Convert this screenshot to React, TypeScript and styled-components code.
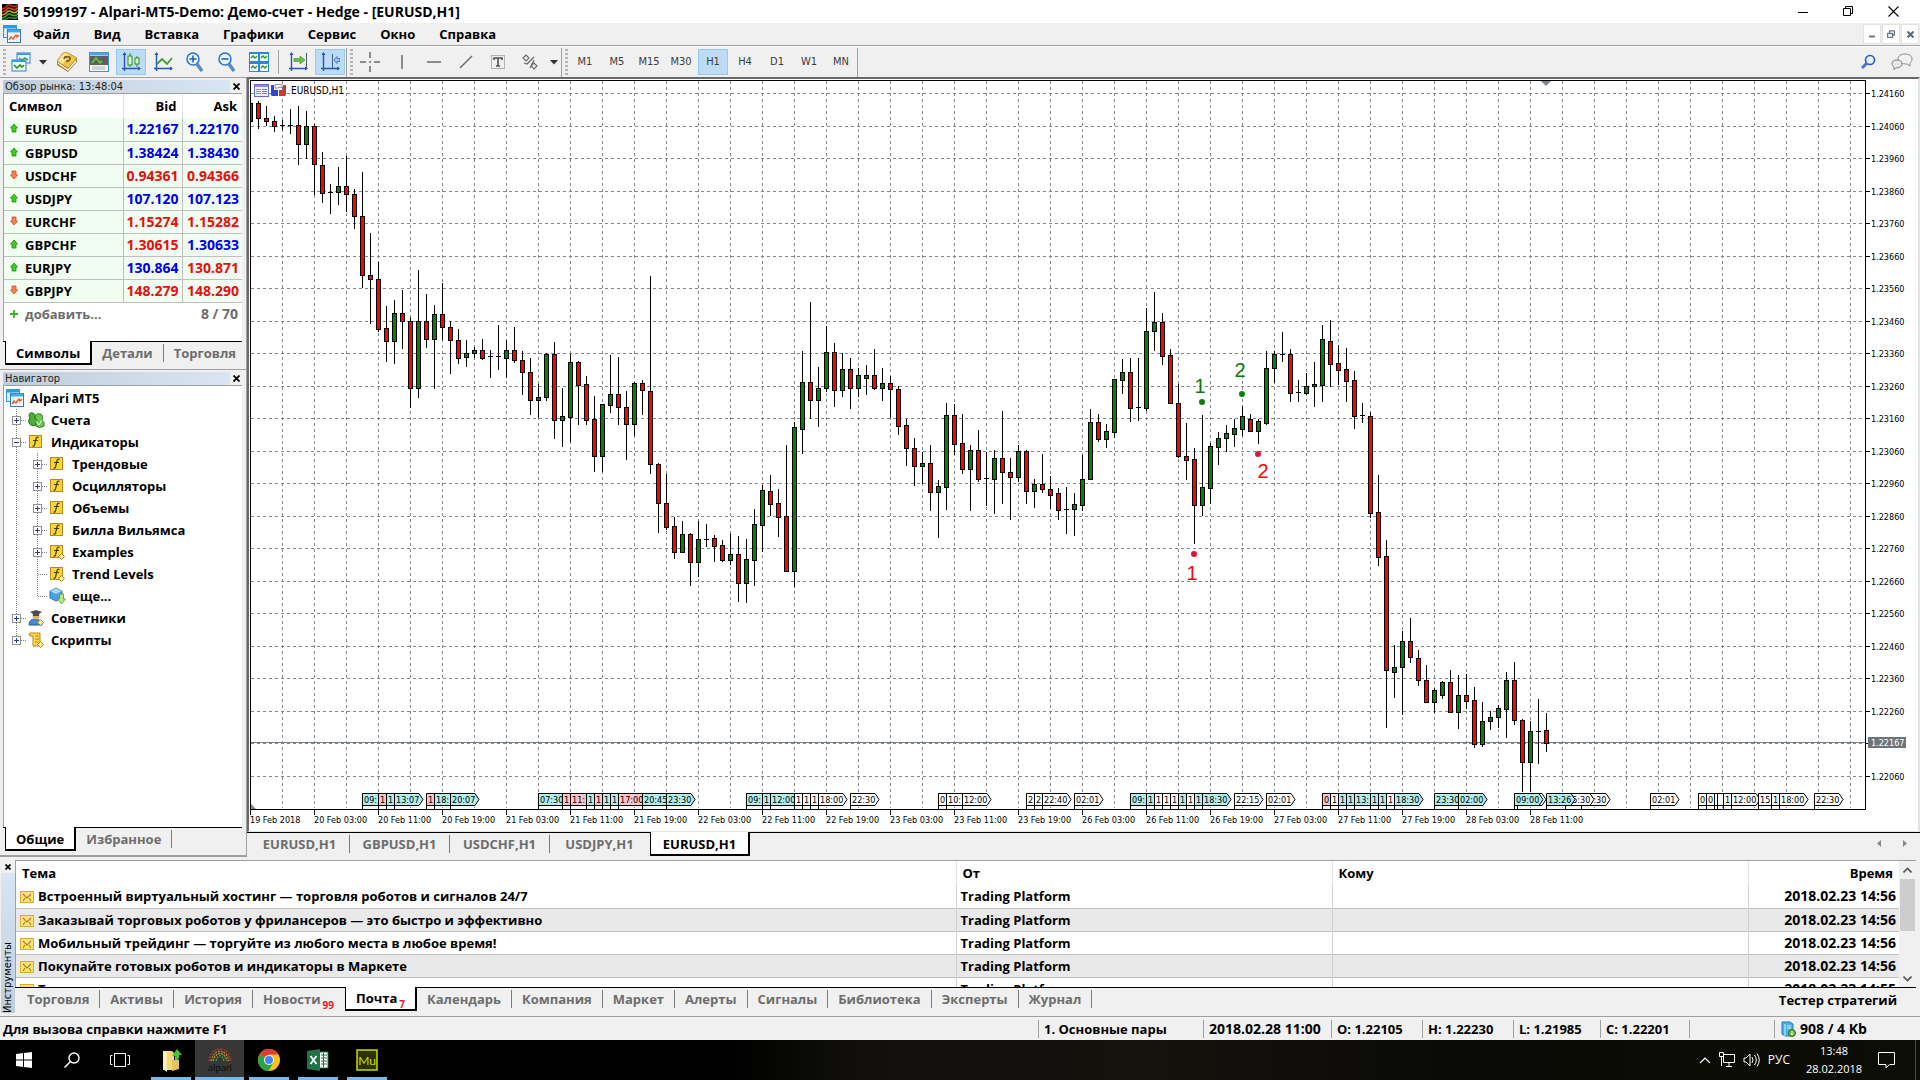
import React from "react";
import styled, { createGlobalStyle, css } from "styled-components";

const UI = `"Open Sans", "Noto Sans", sans-serif`;
const SMALL = `"DejaVu Sans Condensed", "DejaVu Sans", sans-serif`;

const GlobalStyle = createGlobalStyle`
  * { box-sizing: border-box; }
  body { margin: 0; background: #f0f0f0; color: #000; font: 700 13px/18px ${UI}; overflow: hidden; }
  button { font: inherit; color: inherit; background: none; border: 0; padding: 0; margin: 0; cursor: default; }
  svg { display: block; flex: none; }
  table { border-collapse: collapse; }
`;

/* ---------- window frame ---------- */
const Window = styled.div`
  display: flex;
  flex-direction: column;
  height: 100vh;
`;
const TitleBar = styled.header`
  display: flex;
  align-items: center;
  height: 23px;
  padding: 0 4px 0 2px;
  background: #fff;
`;
const Title = styled.h1`
  flex: 1;
  margin: 0 0 0 5px;
  font-size: 14px;
  line-height: 20px;
  font-weight: 700;
`;
const CaptionButton = styled.button`
  display: grid;
  place-items: center;
  width: 45px;
  height: 22px;
`;
const MenuBar = styled.nav`
  display: flex;
  align-items: center;
  height: 23px;
  padding-left: 3px;
  border-bottom: 1px solid #a0a0a0;
`;
const MenuItems = styled.div`
  display: flex;
  flex: 1;
`;
const MenuItem = styled.button`
  padding: 0 12px;
  line-height: 20px;
`;
const ChildButton = styled.button`
  display: grid;
  place-items: center;
  width: 18px;
  height: 20px;
  margin-right: 1px;
  background: #fff;
  border: 1px solid #e2e2e2;
`;

/* ---------- toolbar ---------- */
const Toolbar = styled.div`
  display: flex;
  align-items: center;
  height: 31px;
  border-top: 1px solid #fff;
`;
const Grip = styled.span`
  width: 3px;
  height: 26px;
  margin: 0 1px 0 3px;
  background: repeating-linear-gradient(#b4b4b4 0 2px, transparent 2px 4px);
`;
const ToolButton = styled.button<{ $on?: boolean; $wide?: boolean }>`
  display: flex;
  align-items: center;
  justify-content: center;
  gap: 8px;
  width: ${(p) => (p.$wide ? 44 : 30)}px;
  height: 26px;
  margin: 0 ${(p) => (p.$wide ? 0 : 1)}px;
  border: 1px solid ${(p) => (p.$on ? "#99c9ef" : "transparent")};
  background: ${(p) => (p.$on ? "#bddcf4" : "transparent")};
  color: #3c3c3c;
  font: 400 11px/14px ${SMALL};
`;
const ToolSeparator = styled.span<{ $gap?: number }>`
  width: 1px;
  height: ${(p) => (p.$gap ? 24 : 29)}px;
  margin: 0 ${(p) => p.$gap ?? 0}px;
  background: #a0a0a0;
`;
const Spacer = styled.span`
  flex: 1;
`;
const SideTools = styled.div`
  display: flex;
  gap: 2px;
  margin-left: auto;
  padding-right: 2px;
`;
const ArrowButton = styled.button<{ $wide?: boolean }>`
  display: grid;
  place-items: center;
  width: ${(p) => (p.$wide ? 26 : 15)}px;
  height: ${(p) => (p.$wide ? 20 : 26)}px;
`;

/* ---------- docking panels ---------- */
const Workspace = styled.main`
  display: flex;
  flex: 1;
  min-height: 0;
`;
const Dock = styled.aside`
  display: flex;
  flex-direction: column;
  width: 247px;
  border-top: 1px solid #a0a0a0;
  border-bottom: 2px solid #a0a0a0;
  border-right: 1px solid #a0a0a0;
`;
const Panel = styled.section<{ $grow?: boolean }>`
  display: flex;
  flex-direction: column;
  flex: ${(p) => (p.$grow ? "1" : "none")};
  min-height: 0;
  padding: 1px 4px 4px 3px;
  border-bottom: ${(p) => (p.$grow ? 0 : 1)}px solid #a0a0a0;
`;
const PanelHead = styled.div`
  display: flex;
  align-items: center;
  height: 14px;
`;
const PanelTitle = styled.h2`
  flex: 1;
  margin: 0;
  padding-left: 2px;
  font: 400 11px/13px ${SMALL};
  color: #1c1c1c;
  background: linear-gradient(90deg, #bfcddb, #d9e5f3);
`;
const CloseButton = styled.button`
  display: grid;
  place-items: center;
  width: 12px;
  height: 13px;
`;
const PanelBody = styled.div<{ $grow?: boolean }>`
  flex: ${(p) => (p.$grow ? "1" : "none")};
  min-height: ${(p) => (p.$grow ? 0 : 248)}px;
  background: #fff;
  border: 1px solid #a0a0a0;
  border-width: 1px 0 0 1px;
`;

const Quotes = styled.table`
  width: 100%;
  table-layout: fixed;
  font-size: 14px;
  line-height: 18px;
  th {
    height: 24px;
    padding: 0 5px 0 5px;
    text-align: right;
    font-size: 13px;
    border-right: 1px solid #e4e4e4;
  }
  th:first-child { text-align: left; }
  th:last-child { border-right: 0; }
`;
const QuoteRow = styled.tr`
  background: #f0fdf0;
  border-bottom: 1px solid #c0c0c0;
  td { height: 23px; padding: 0; border-right: 1px solid #c0c0c0; }
  td:last-child { border-right: 0; }
`;
const SymbolCell = styled.td`
  font-size: 13px;
  svg { display: inline-block; vertical-align: 1px; margin: 0 7px 0 6px; }
`;
const Quote = styled.td<{ $up: boolean }>`
  text-align: right;
  color: ${(p) => (p.$up ? "#0000e6" : "#e60f0f")};
  && { padding-right: 3px; }
`;
const AddRow = styled.tr`
  color: #6d6d6d;
  td { height: 23px; padding: 0; }
  td:last-child { text-align: right; padding-right: 4px; }
`;

const TabStrip = styled.div<{ $h?: number }>`
  display: flex;
  align-items: flex-start;
  flex: none;
  height: ${(p) => p.$h ?? 24}px;
  border-top: 1px solid #000;
`;
const Tab = styled.button<{ $on?: boolean; $last?: boolean }>`
  height: 18px;
  margin-top: 2px;
  padding: 0 10px;
  line-height: 18px;
  color: #6d6d6d;
  white-space: nowrap;
  border-right: 1px solid ${(p) => (p.$last ? "transparent" : "#7a7a7a")};
  ${(p) =>
    p.$on &&
    css`
      height: 24px;
      margin: -1px 0 0;
      padding-top: 2px;
      color: #000;
      background: #fff;
      border: solid #000;
      border-width: 0 2px 2px 1px;
    `}
`;
const LeadTabs = styled(TabStrip)`
  padding-left: 2px;
`;
const ChartTabs = styled(TabStrip)`
  padding: 0 2px 0 3px;
  ${Tab} { padding-left: 11px; padding-right: 11px; min-width: 100px; }
`;
const Badge = styled.sup`
  margin: 0 0 0 2px;
  font: 700 10px/10px ${UI};
  vertical-align: -5px;
  color: #e0202c;
`;

/* ---------- navigator ---------- */
const Tree = styled.ul`
  margin: 0;
  padding: 1px 0 0 2px;
  list-style: none;
`;
const TreeItem = styled.li`
  display: flex;
  align-items: center;
  height: 22px;
  line-height: 20px;
`;
const TreeLabel = styled.span`
  margin-left: 6px;
`;

/* ---------- chart ---------- */
const ChartPane = styled.section`
  display: flex;
  flex-direction: column;
  flex: 1;
  min-width: 0;
  background: #f0f0f0;
`;
const ChartBody = styled.div`
  display: grid;
  grid-template-columns: minmax(0, 1fr) 52px;
  grid-template-rows: minmax(0, 1fr) 21px;
  flex: 1;
  min-height: 0;
  background: #fff;
  border: 2px solid #696969;
  border-width: 2px 2px 1px 2px;
  border-color: #696969 #e3e3e3 #e3e3e3 #696969;
  padding: 1px 0 0 1px;
`;
const Plot = styled.div`
  border: 1px solid #000;
  min-height: 0;
`;
const Scaled = styled.svg`
  width: 100%;
  height: 100%;
  overflow: hidden;
`;
const AxisSvg = styled.svg<{ $span?: boolean }>`
  width: 100%;
  height: 100%;
  grid-column: ${(p) => (p.$span ? "1 / -1" : "auto")};
  overflow: visible;
`;
const Tick = styled.text<{ $light?: boolean }>`
  font: 400 9px ${SMALL};
  fill: ${(p) => (p.$light ? "#fff" : "#000")};
`;
const Legend = styled.text`
  font: 400 10px ${SMALL};
  fill: #000;
`;
const Mark = styled.text`
  font: 400 20px "Liberation Sans", Arial, sans-serif;
  text-anchor: middle;
`;

/* ---------- toolbox ---------- */
const Toolbox = styled.section`
  display: flex;
  flex: none;
  padding: 3px 4px 3px 0;
`;
const ToolboxSide = styled.div`
  display: flex;
  flex-direction: column;
  align-items: center;
  width: 15px;
`;
const SideTitle = styled.h2`
  flex: 1;
  width: 14px;
  margin: 0;
  writing-mode: vertical-rl;
  transform: rotate(180deg);
  font: 400 11px/14px ${SMALL};
  background: linear-gradient(#bfcddb, #d9e5f3);
`;
const ToolboxMain = styled.div`
  flex: 1;
  min-width: 0;
`;
const MailArea = styled.div`
  display: flex;
  height: 127px;
  background: #fff;
  border: 1px solid #a0a0a0;
  border-width: 1px 0 0 1px;
`;
const MailClip = styled.div`
  flex: 1;
  overflow: hidden;
`;
const Mail = styled.table`
  width: 100%;
  table-layout: fixed;
  th { height: 24px; padding: 0 6px; text-align: left; font-weight: 700; border-right: 1px solid #e4e4e4; }
  td { height: 23px; padding: 0 3px 0 4px; border-right: 1px solid #d0d0d0; white-space: nowrap; }
  th:last-child, td:last-child { text-align: right; border-right: 0; }
  td:last-child { font-size: 14px; }
  td:first-child svg { display: inline-block; vertical-align: -3px; margin-right: 4px; }
  tbody tr { border-bottom: 1px solid #c0c0c0; }
  tbody tr:nth-child(even) { background: #e9e9e9; }
`;
const ScrollBar = styled.div`
  display: flex;
  flex-direction: column;
  align-items: center;
  width: 17px;
  padding: 6px 0 5px;
  background: #f0f0f0;
`;
const Thumb = styled.div`
  width: 15px;
  height: 52px;
  margin: 6px 0 auto;
  background: #cdcdcd;
`;
const Tester = styled.button`
  margin: 2px 19px 0 auto;
  line-height: 20px;
`;

const StatusBar = styled.footer`
  display: flex;
  align-items: center;
  height: 24px;
  border-top: 1px solid #a0a0a0;
`;
const Hint = styled.span`
  flex: 1;
  padding-left: 3px;
`;
const Cell = styled.span<{ $w: number; $large?: boolean }>`
  display: flex;
  align-items: center;
  gap: 4px;
  width: ${(p) => p.$w}px;
  height: 18px;
  padding-left: 5px;
  border-left: 1px solid #a0a0a0;
  font-size: ${(p) => (p.$large ? 14 : 13)}px;
  white-space: nowrap;
`;

/* ---------- taskbar ---------- */
const Taskbar = styled.footer`
  display: flex;
  height: 40px;
  background: linear-gradient(90deg, #000 0 38%, #11100c 45%, #15120e 60%, #0a0a06 75%, #0c0d06);
  color: #fff;
  font-weight: 400;
  font-size: 12px;
  line-height: 18px;
`;
const TaskButton = styled.button<{ $open?: boolean; $on?: boolean }>`
  display: grid;
  place-items: center;
  width: ${(p) => (p.$open ? (p.$on ? 49 : 40) : 48)}px;
  margin: 0 ${(p) => (p.$open && !p.$on ? 4 : 0)}px 0 ${(p) => (p.$open && !p.$on ? 5 : 0)}px;
  background: ${(p) => (p.$on ? "#373737" : "transparent")};
  border-bottom: 3px solid ${(p) => (p.$open ? "#76b9ed" : "transparent")};
  border-top: 3px solid transparent;
`;
const OpenApps = styled.div`
  display: flex;
  margin-left: 2px;
`;
const Tray = styled.div`
  display: flex;
  align-items: center;
  margin-left: auto;
  gap: 8px;
`;
const Clock = styled.time`
  width: 72px;
  font-size: 11px;
  text-align: center;
  white-space: pre-line;
`;
const DesktopEdge = styled.span`
  width: 5px;
  height: 40px;
  margin-left: 12px;
  border-left: 1px solid #4a4a4a;
`;

/* ---------- data ---------- */
// Price scale of the plot: pixels per stored unit, counted down from its top edge.
const UNIT = 530 / 1568;
const STEP = 8;

type Kind = "g" | "r" | "d";
// high, body top, body bottom, low, kind (g rising, r falling, d doji)
const CANDLES: [number, number, number, number, Kind][] = [
  [68,68,120,120,"g"],[62,69,113,144,"r"],[77,113,122,136,"r"],[107,122,137,153,"r"],[118,133,134,148,"d"],
  [86,134,136,159,"d"],[77,134,190,250,"r"],[92,136,190,234,"g"],[130,137,249,340,"r"],[212,250,335,363,"r"],
  [307,332,334,396,"d"],[257,315,332,370,"g"],[225,315,338,391,"r"],[322,338,403,440,"r"],[272,403,578,614,"r"],
  [453,578,590,721,"r"],[538,590,736,745,"r"],[669,735,773,833,"r"],[651,690,773,839,"g"],[621,690,714,796,"r"],
  [704,714,912,969,"r"],[562,714,912,940,"g"],[633,714,765,793,"r"],[666,693,765,913,"g"],[601,693,732,769,"r"],
  [713,732,770,869,"r"],[737,770,821,839,"r"],[769,809,819,849,"g"],[790,800,809,822,"g"],[766,800,823,827,"r"],
  [799,818,820,881,"d"],[725,818,818,857,"d"],[769,800,821,881,"g"],[731,800,829,836,"r"],[802,829,865,932,"r"],
  [822,865,948,991,"r"],[899,938,948,1000,"g"],[808,812,939,949,"g"],[775,812,1007,1061,"r"],[911,995,1007,1085,"g"],
  [811,835,996,1071,"g"],[831,835,901,1020,"r"],[876,900,1005,1021,"r"],[935,1004,1113,1160,"r"],[959,960,1113,1160,"g"],
  [814,930,961,984,"g"],[820,930,968,1020,"r"],[920,968,1017,1123,"r"],[894,897,1017,1052,"g"],[888,897,918,990,"r"],
  [580,921,1135,1165,"r"],[1133,1137,1252,1340,"r"],[1166,1252,1321,1330,"r"],[1293,1320,1395,1417,"r"],[1305,1344,1395,1398,"g"],
  [1341,1344,1425,1496,"r"],[1305,1359,1425,1470,"g"],[1314,1357,1359,1381,"d"],[1346,1356,1378,1425,"r"],[1361,1377,1419,1425,"r"],
  [1343,1403,1419,1434,"g"],[1349,1403,1487,1543,"r"],[1358,1417,1487,1546,"g"],[1269,1315,1419,1496,"g"],[1198,1214,1316,1395,"g"],
  [1169,1217,1253,1290,"r"],[1210,1252,1292,1352,"r"],[1080,1291,1452,1455,"r"],[1012,1028,1452,1499,"g"],[802,892,1032,1105,"g"],
  [657,892,948,1002,"r"],[849,912,948,1026,"g"],[728,806,912,922,"g"],[778,806,918,966,"r"],[808,856,918,937,"g"],
  [822,856,912,972,"r"],[852,874,912,937,"g"],[843,874,881,932,"g"],[796,874,912,916,"r"],[852,897,912,949,"g"],
  [876,897,915,1000,"r"],[906,915,1023,1049,"r"],[1003,1022,1090,1141,"r"],[1059,1090,1143,1200,"r"],[1101,1134,1143,1195,"g"],
  [1080,1134,1218,1275,"r"],[1183,1202,1218,1355,"g"],[956,990,1203,1271,"g"],[959,990,1076,1108,"r"],[988,1075,1150,1165,"r"],
  [1080,1096,1150,1275,"g"],[1035,1096,1179,1188,"r"],[1101,1177,1178,1260,"d"],[1095,1119,1179,1284,"g"],[979,1119,1161,1254,"r"],
  [1118,1161,1174,1301,"r"],[1080,1099,1174,1188,"g"],[1095,1099,1215,1254,"r"],[1180,1196,1215,1266,"g"],[1106,1196,1209,1221,"r"],
  [1172,1211,1227,1269,"r"],[1206,1223,1271,1301,"r"],[1203,1268,1270,1343,"d"],[1221,1255,1268,1349,"g"],[1108,1181,1256,1274,"g"],
  [973,1013,1181,1183,"g"],[988,1013,1061,1071,"r"],[1018,1039,1061,1088,"g"],[886,886,1040,1060,"g"],[825,865,887,928,"g"],
  [822,865,969,1011,"r"],[822,968,970,1008,"d"],[676,744,971,978,"g"],[627,717,744,802,"g"],[689,717,816,842,"r"],
  [796,815,957,959,"r"],[899,957,1113,1117,"r"],[1015,1113,1123,1183,"r"],[1089,1122,1256,1372,"r"],[991,1205,1256,1290,"g"],
  [1074,1084,1206,1254,"g"],[1041,1060,1085,1138,"g"],[1021,1045,1060,1101,"g"],[1003,1031,1046,1085,"g"],[964,995,1032,1053,"g"],
  [988,1004,1037,1041,"r"],[1003,1010,1037,1076,"g"],[802,853,1014,1020,"g"],[802,812,853,895,"g"],[746,812,813,833,"d"],
  [796,812,925,952,"r"],[888,923,924,952,"d"],[867,906,925,932,"g"],[834,900,906,966,"g"],[725,767,901,952,"g"],
  [710,773,841,907,"r"],[784,838,857,901,"r"],[793,856,890,952,"r"],[861,889,993,1032,"r"],[956,992,994,1014,"d"],
  [982,995,1280,1295,"r"],[1169,1279,1410,1438,"r"],[1361,1409,1745,1917,"r"],[1672,1738,1751,1828,"g"],[1630,1661,1738,1879,"g"],
  [1592,1661,1708,1725,"r"],[1686,1711,1776,1792,"r"],[1731,1776,1839,1842,"r"],[1799,1806,1839,1872,"g"],[1778,1782,1819,1830,"g"],
  [1746,1782,1871,1873,"r"],[1760,1818,1871,1920,"g"],[1757,1818,1836,1860,"r"],[1796,1835,1964,1976,"r"],[1841,1895,1964,1972,"g"],
  [1867,1886,1896,1922,"g"],[1849,1859,1886,1917,"g"],[1750,1776,1860,1946,"g"],[1723,1776,1893,1907,"r"],[1889,1892,2019,2106,"r"],
  [1897,1927,2019,2106,"g"],[1831,1925,1927,2023,"d"],[1873,1924,1961,1987,"r"],
];

type Tone = "c" | "p" | "w";
const TONES: Record<Tone, string> = { c: "#b4ecea", p: "#fbc3cb", w: "#fff" };
// offset from the left edge of the plot, caption, tone; later flags cover earlier ones
const FLAGS: [number, string, Tone][] = [
  [112,"09:","c"],[128,"1","p"],[136,"1","c"],[144,"13:07","c"],[176,"1","p"],[184,"18:","c"],[200,"20:07","c"],
  [288,"07:30","c"],[312,"1","p"],[320,"11:","p"],[336,"1","c"],[344,"1","p"],[352,"1","c"],[360,"1","c"],
  [368,"17:00","p"],[392,"20:45","c"],[416,"23:30","c"],
  [496,"09:","c"],[512,"1","c"],[520,"12:00","c"],[544,"1","w"],[552,"1","w"],[560,"1","w"],[568,"18:00","w"],
  [600,"22:30","w"],[688,"0","w"],[696,"10:","w"],[712,"12:00","w"],[776,"2","w"],[784,"2","w"],[792,"22:40","w"],
  [824,"02:01","w"],[880,"09:","c"],[896,"1","c"],[904,"1","w"],[912,"1","w"],[920,"1","w"],[928,"1","c"],
  [936,"1","w"],[944,"1","c"],[952,"18:30","c"],[984,"22:15","w"],[1016,"02:01","w"],
  [1072,"0","p"],[1080,"1","w"],[1088,"1","c"],[1096,"1","c"],[1104,"13:","c"],[1120,"1","c"],[1128,"1","c"],
  [1136,"1","w"],[1144,"18:30","c"],[1184,"23:30","c"],[1208,"02:00","c"],
  [1331,"16:30","w"],[1315,"15:30","w"],[1267,"","w"],[1264,"09:00","c"],[1296,"13:26","c"],
  [1400,"02:01","w"],[1448,"0","w"],[1456,"0","w"],[1464,"","w"],[1467,"","w"],[1473,"1","w"],[1481,"12:00","w"],
  [1508,"15","w"],[1521,"1","w"],[1529,"18:00","w"],[1564,"22:30","w"],
];

const DAYS = ["20", "21", "22", "23", "26", "27"];
const TIMES = [
  "19 Feb 2018",
  ...DAYS.flatMap((d) => ["03:00", "11:00", "19:00"].map((t) => `${d} Feb ${t}`)),
  "28 Feb 03:00",
  "28 Feb 11:00",
];
const range = (n: number) => Array.from({ length: n }, (_, i) => i);
const levelY = (i: number) => Math.round(13 + 32.5 * i);
const PRICE_Y = 662;

const QUOTES: [string, boolean, string, boolean, string, boolean][] = [
  ["EURUSD", true, "1.22167", true, "1.22170", true],
  ["GBPUSD", true, "1.38424", true, "1.38430", true],
  ["USDCHF", false, "0.94361", false, "0.94366", false],
  ["USDJPY", true, "107.120", true, "107.123", true],
  ["EURCHF", false, "1.15274", false, "1.15282", false],
  ["GBPCHF", true, "1.30615", false, "1.30633", true],
  ["EURJPY", true, "130.864", true, "130.871", false],
  ["GBPJPY", false, "148.279", false, "148.290", false],
];

const MAILS = [
  ["Встроенный виртуальный хостинг — торговля роботов и сигналов 24/7", "2018.02.23 14:56"],
  ["Заказывай торговых роботов у фрилансеров — это быстро и эффективно", "2018.02.23 14:56"],
  ["Мобильный трейдинг — торгуйте из любого места в любое время!", "2018.02.23 14:56"],
  ["Покупайте готовых роботов и индикаторы в Маркете", "2018.02.23 14:56"],
  ["Т", "2018.02.23 14:55"],
];

/* ---------- icons ---------- */
const Icon = ({ w = 20, h = w, children }: { w?: number; h?: number; children: React.ReactNode }) => (
  <svg width={w} height={h} viewBox={`0 0 ${w} ${h}`} fill="none" aria-hidden="true">
    {children}
  </svg>
);

const AppIcon = () => (
  <Icon w={16}>
    <rect width="16" height="16" fill="#0c0a05" />
    <path d="M0 5q4-1 5-3t5 0 6-2" stroke="#d0281c" strokeWidth="1.6" />
    <path d="M0 8q4-1 5-3t5 0 6-2" stroke="#e0491c" strokeWidth="1.6" />
    <path d="M0 11q4-1 5-3t5 0 6-2" stroke="#b8b020" strokeWidth="1.6" />
    <path d="M0 14q4-1 5-3t5 0 6-2" stroke="#4fae2a" strokeWidth="1.6" />
    <path d="M1 16q4-1 5-2t5 0 5-2" stroke="#2f8f2a" strokeWidth="1.4" />
  </Icon>
);
const WindowsIcon = () => (
  <Icon w={18}>
    <rect x=".5" y=".5" width="13" height="12" fill="#d9edfb" stroke="#2f9bdc" />
    <path d="M1 2h12" stroke="#2f9bdc" strokeWidth="3" />
    <rect x="4.500" y="4.500" width="13" height="13" fill="#fff" stroke="#2b7fc4" />
    <path d="M5 6h12" stroke="#44a9e6" strokeWidth="3" />
    <path d="M8 8v9M11 8v9M14 8v9M5 11h12M5 14h12" stroke="#d5e3ee" />
    <path d="m6 15 2-3 2 2 3-4 1 2 2-2" stroke="#ea5a2c" strokeWidth="1.4" />
  </Icon>
);
const DropIcon = () => (
  <Icon w={8} h={5}><path d="M0 0h8L4 4.500z" fill="#303030" /></Icon>
);
const ChartsIcon = () => (
  <Icon>
    <rect x="6" y="1" width="13" height="10" fill="#eef7fd" stroke="#2f7fd0" />
    <path d="M6 2h13" stroke="#3b9be6" strokeWidth="2" />
    <path d="m8 6 3 2 3-2 3 2" stroke="#3f9f2c" strokeWidth="1.5" />
    <rect x="1" y="8" width="14" height="11" fill="#f3fafe" stroke="#2f7fd0" />
    <path d="M1 9h14" stroke="#3b9be6" strokeWidth="2" />
    <path d="m3 13 3 3 3-3 2 2 2-2" stroke="#2d9a24" strokeWidth="1.700" />
  </Icon>
);
const BookIcon = () => (
  <Icon>
    <path d="M0 9v4l11 7 9-10V6L11 16z" fill="#a9832a" />
    <path d="m0 9 5-7q2-2 4-2l11 6-9 10z" fill="#ecc650" stroke="#b38b24" strokeWidth=".8" />
    <path d="m1 9 4-6q2-2 4-2l3 2-6 9z" fill="#f9e798" />
    <path d="m7 7 1-2q6-1 5 2-1 3-4 2" stroke="#82611a" strokeWidth="1.800" />
    <path d="m1 11 10 7 8-9" stroke="#fffbe8" strokeWidth="1.200" />
  </Icon>
);
const TerminalIcon = () => (
  <Icon>
    <rect x=".5" y=".5" width="19" height="19" fill="#f4f4f4" stroke="#4791d2" />
    <path d="M1 2h18" stroke="#4ca5e8" strokeWidth="3" />
    <path d="M1 4h18v9H1z" fill="#5b6062" />
    <path d="m3 11 4-5 4 5 2-2" stroke="#66c332" strokeWidth="1.800" />
    <path d="M3 15h13M3 17h13" stroke="#b4b4b4" />
  </Icon>
);
const Axes = () => (
  <>
    <path d="M3.500 1v18M1 16.500h18" stroke="#2455b4" strokeWidth="1.400" />
    <path d="m3.500 0 2 3h-4zM20 16.500l-3 2v-4z" fill="#2455b4" />
  </>
);
const CandlesIcon = () => (
  <Icon>
    <Axes />
    <path d="M9 1v14M16 4v11" stroke="#2e8f20" />
    <rect x="7" y="4" width="4" height="9" fill="#d9f4cf" stroke="#2e8f20" />
    <rect x="14" y="6" width="4" height="6" fill="#d9f4cf" stroke="#2e8f20" />
  </Icon>
);
const LineIcon = () => (
  <Icon><Axes /><path d="m4 12 5-5 5 5 5-6" stroke="#3f9f2c" strokeWidth="1.800" /></Icon>
);
const ZoomIcon = ({ plus }: { plus?: boolean }) => (
  <Icon w={18} h={20}>
    <circle cx="7" cy="7" r="6" fill="#e6f4ff" stroke="#2f73c8" strokeWidth="1.500" />
    <path d="m11 12 5 7" stroke="#5a8bbd" strokeWidth="3.500" />
    <path d={plus ? "M3.500 7h7M7 3.500v7" : "M3.500 7h7"} stroke="#2560b4" strokeWidth="1.600" />
  </Icon>
);
const TileIcon = () => (
  <Icon>
    <rect width="20" height="20" fill="#2f86d6" />
    {[[1, 2], [11, 2], [1, 12], [11, 12]].map(([x, y]) => (
      <g key={`${x}${y}`}>
        <rect x={x} y={y} width="8" height="7" fill="#eef7fd" />
        <path d={`m${x + 1} ${y + 4} 2-2 2 2 2-2`} stroke="#2d9a24" strokeWidth="1.300" />
      </g>
    ))}
  </Icon>
);
const AutoScrollIcon = () => (
  <Icon><Axes /><path d="M18.500 1v15" stroke="#4d5a66" /><path d="M6 6.500h6V4l5 4-5 4V9.500H6z" fill="#6ec04a" stroke="#3f9530" strokeWidth=".7" /></Icon>
);
const ShiftIcon = () => (
  <Icon><Axes /><path d="M12.500 2v14" stroke="#3a5f92" /><path d="M20 6.500h-3V4.500l-3 3.500 3 3.500V9.500h3z" fill="#9ec3f0" stroke="#2f6cc0" strokeWidth=".8" /></Icon>
);
const g = "#6a6a6a";
const CrossIcon = () => <Icon><path d="M0 10h6M14 10h6M10 0v6M10 14v6M9 10h2" stroke={g} strokeWidth="1.500" /></Icon>;
const VLineIcon = () => <Icon><path d="M10 3v14" stroke={g} strokeWidth="1.500" /></Icon>;
const HLineIcon = () => <Icon><path d="M3 10h14" stroke={g} strokeWidth="1.500" /></Icon>;
const TrendIcon = () => <Icon><path d="M4 16 16 4" stroke={g} strokeWidth="1.500" /></Icon>;
const TextIcon = () => (
  <Icon>
    <rect x="3.500" y="3.500" width="13" height="13" stroke="#777" strokeDasharray="1 1" />
    <path d="M6 8V6h8v2M10 6v8M8 14h4" stroke="#505050" strokeWidth="1.600" />
  </Icon>
);
const ShapesIcon = () => (
  <Icon w={16}>
    <path d="m4 1 3 3-3 3-3-3zM2 9l3 1 7-7M8 14l4-8M12 9l3 3-3 3-3-3z" stroke={g} strokeWidth="1.200" />
  </Icon>
);
const SearchIcon = () => (
  <Icon w={16}><circle cx="10" cy="6" r="4.500" fill="#e8f2ff" stroke="#2d55c8" strokeWidth="1.600" /><path d="m7 9-5 5" stroke="#4a74dc" strokeWidth="3" /></Icon>
);
const ChatIcon = () => (
  <Icon w={22} h={18}>
    <path d="M14 1c4 0 7 2 7 5 0 2-1 3-2 4v3l-3-2c-5 0-9-2-9-5s3-5 7-5z" fill="#f2f2f2" stroke="#8d8d8d" />
    <path d="M6 7c3 0 5 1 5 4s-3 4-6 4l-2 2v-3c-1-1-2-2-2-3 0-3 2-4 5-4z" fill="#e6e6e6" stroke="#858585" />
  </Icon>
);
const TrendArrow = ({ up }: { up: boolean }) => (
  <svg width="8" height="10" viewBox="0 0 8 10" aria-hidden="true">
    <path d={up ? "M4 1 7.500 5H6v4H2V5H.5z" : "M4 9 7.500 5H6V1H2v4H.5z"} fill={up ? "#45c928" : "#f4805a"} stroke={up ? "#1f9010" : "#d0492a"} strokeWidth=".8" />
  </svg>
);
const Close = ({ s = 7, c = "#000", w = 1.8 }: { s?: number; c?: string; w?: number }) => (
  <Icon w={s}><path d={`M.5.5l${s - 1} ${s - 1}M${s - 0.5}.5l-${s - 1} ${s - 1}`} stroke={c} strokeWidth={w} /></Icon>
);
const FIcon = ({ own }: { own?: boolean }) => (
  <Icon w={18}>
    <rect x="2.500" y="2.500" width="12" height="12" fill="#fbd53a" stroke="#b48a1c" />
    <path d="M11.500 4.500q-2-1-2.500 1.500l-1.500 6q-.5 1.500-2 1M6 7.500h5" stroke="#4a3a08" strokeWidth="1.200" />
    {own && <path d="m13.500 10.500 3 3-3 3-3-3z" fill="#fdeea0" stroke="#a8861e" />}
  </Icon>
);
const UsersIcon = () => (
  <Icon w={18}>
    <path d="M2 5q0-4 4-3 3 1 2 5 3 2 2 7-6 2-8-2-1-4 1-5z" fill="#4cae35" stroke="#24741a" />
    <path d="M8 6q1-4 5-3 4 1 2 6 3 2 2 6-5 3-8 0-1-3 1-5z" fill="#6fc84c" stroke="#2b7d1e" />
    <path d="m9 10 3 4 3-5" stroke="#e8fadf" />
  </Icon>
);
const MarketIcon = () => (
  <Icon w={18}>
    <path d="m8 1 6 3v7l-6 3-6-3V4z" fill="#4aa3dc" stroke="#2a76b0" />
    <path d="m2 4 6 3 6-3-6-3z" fill="#a4dbf8" />
    <path d="M11.500 7h4v5h2l-4 5-4-5h2z" fill="#b6e87a" stroke="#5a9a2c" strokeWidth=".8" />
  </Icon>
);
const ExpertIcon = () => (
  <Icon w={18}>
    <path d="M2 16q0-6 6-6t7 6z" fill="#3f8ed4" stroke="#245f9c" />
    <circle cx="9" cy="7" r="3.500" fill="#d8b26a" />
    <path d="m3 3 6-2 6 2-3 2v2H6V5z" fill="#4c4c4c" />
    <path d="m13.500 10.500 3 3-3 3-3-3z" fill="#fdeea0" stroke="#a8861e" />
  </Icon>
);
const ScriptIcon = () => (
  <Icon w={18}>
    <path d="M3 2h10v13H6V5H3q-2-1 0-3z" fill="#fbd84c" stroke="#b48a1c" />
    <path d="M8 5h4M8 8h4M8 11h3" stroke="#b48a1c" />
    <path d="m13.500 10.500 3 3-3 3-3-3z" fill="#fdeea0" stroke="#a8861e" />
  </Icon>
);
const MailIcon = () => (
  <Icon w={14}>
    <rect x=".5" y="1.500" width="13" height="11" fill="#fde37a" stroke="#dba92c" />
    <path d="m3 4 4 4 4-4M3 11l2-3M11 11 9 8" stroke="#b07c10" strokeWidth="1.100" />
  </Icon>
);

// Dotted guide of the tree: a vertical line, a stub to the right and an optional box.
const Guide = ({ down = true, stub = true, box }: { down?: boolean; stub?: boolean; box?: "+" | "-" }) => (
  <svg width="21" height="22" viewBox="0 0 21 22" fill="none" shapeRendering="crispEdges" aria-hidden="true">
    <path d={`M10.500 0v${down ? 22 : 11}`} stroke="#808080" strokeDasharray="1 1" />
    {stub && <path d="M11 11.500h10" stroke="#808080" strokeDasharray="1 1" />}
    {box && (
      <>
        <rect x="6.500" y="7.500" width="8" height="8" fill="#fff" stroke="#919191" />
        <path d={box === "+" ? "M8 11.500h5M10.500 9v5" : "M8 11.500h5"} stroke="#2b3f8c" />
      </>
    )}
  </svg>
);

/* ---------- parts ---------- */
const Candle = ({ i }: { i: number }) => {
  const [h, t, b, l, kind] = CANDLES[i];
  const x = i * STEP + 0.5;
  const y = (v: number) => Math.round(v * UNIT);
  const top = y(t);
  const height = Math.max(y(b) - top, 1);
  return (
    <g stroke="#000">
      <path d={`M${x} ${y(h)}V${y(l)}`} />
      {kind === "d" ? (
        <path d={`M${x - 2.5} ${top + 0.5}h5`} />
      ) : (
        <rect x={x - 2} y={top + 0.5} width="4" height={height} fill={kind === "g" ? "#0f7a0f" : "#f00808"} />
      )}
    </g>
  );
};

const Flag = ({ x, text, tone }: { x: number; text: string; tone: Tone }) => (
  <g>
    <path d={`M${x + 0.5} 729V713.500H${x + 25}l4 6-4 6H${x + 0.5}`} fill={TONES[tone]} stroke="#000" />
    <Tick x={x + 2} y="723">{text}</Tick>
  </g>
);

const Chart = () => (
  <ChartBody>
    <Plot>
      <Scaled role="img" aria-label="EURUSD,H1" fill="none">
        <g transform="translate(-1 -1)">
          <g stroke="#7d8790" strokeDasharray="3 3" shapeRendering="crispEdges">
            {range(60).map((i) => <line key={i} x1={32.5 + 32 * i} x2={32.5 + 32 * i} y1="1" y2="100%" />)}
            {range(22).map((i) => <line key={i} x1="1" x2="100%" y1={levelY(i) + 0.5} y2={levelY(i) + 0.5} />)}
          </g>
          <line x1="0" x2="101%" y1={PRICE_Y + 0.5} y2={PRICE_Y + 0.5} stroke="#787c80" />
          <g shapeRendering="crispEdges">
            {CANDLES.map((_, i) => <Candle key={i} i={i} />)}
          </g>
          {FLAGS.map(([x, text, tone], i) => <Flag key={i} x={x} text={text} tone={tone} />)}
          <path d="M1291 1h10l-5 5z" fill="#7d8790" />
          <path d="M1 724v5h5z" fill="#7d8790" />
          <g fill="#0f7a0f">
            <circle cx="952" cy="322" r="3" />
            <circle cx="992" cy="314" r="3" />
            <Mark x="950" y="313">1</Mark>
            <Mark x="990" y="297">2</Mark>
          </g>
          <g fill="#dc143c">
            <circle cx="1008" cy="374" r="3" />
            <circle cx="944" cy="474" r="3" />
          </g>
          <g fill="#f00808">
            <Mark x="1013" y="398">2</Mark>
            <Mark x="942" y="500">1</Mark>
          </g>
          <rect x="4.500" y="4.500" width="14" height="12" fill="#f2f2ff" stroke="#6a6ac8" />
          <path d="M5 6h13" stroke="#8c8ce0" strokeWidth="2" />
          <path d="M6 9.500h5M6 11.500h5M6 13.500h5" stroke="#e0705a" />
          <path d="M12 9.500h5M12 11.500h5M12 13.500h5" stroke="#6a7ae0" />
          <path d="M21 5h3v5h4v6h-6l-1-1z" fill="#3046d8" />
          <path d="M36 5h-3v5h-4v6h6l1-1z" fill="#c83a34" />
          <path d="M25 4.500h7v3h-4l-2 2v-2h-1z" fill="#f4f4f4" stroke="#777" strokeWidth=".7" />
          <Legend x="41" y="14">EURUSD,H1</Legend>
        </g>
      </Scaled>
    </Plot>
    <AxisSvg fill="none">
      {range(22).map((i) => (
        <g key={i}>
          <path d={`M0 ${levelY(i) + 0.5}h4`} stroke="#000" />
          <Tick x="5" y={levelY(i) + 4}>{(1.2416 - i * 0.001).toFixed(5)}</Tick>
        </g>
      ))}
      <rect x="2" y={PRICE_Y - 5} width="38" height="11" fill="#6c747c" />
      <Tick $light x="5" y={PRICE_Y + 4}>1.22167</Tick>
    </AxisSvg>
    <AxisSvg $span fill="none">
      {TIMES.map((t, i) => (
        <g key={t}>
          <path d={`M${64 * i + 0.5} 0v5`} stroke="#000" />
          <Tick x={64 * i} y="13">{t}</Tick>
        </g>
      ))}
    </AxisSvg>
  </ChartBody>
);

const MarketWatch = () => (
  <Panel>
    <PanelHead>
      <PanelTitle>Обзор рынка: 13:48:04</PanelTitle>
      <CloseButton aria-label="Закрыть"><Close /></CloseButton>
    </PanelHead>
    <PanelBody>
      <Quotes>
        <colgroup><col /><col width="59" /><col width="60" /></colgroup>
        <thead><tr><th>Символ</th><th>Bid</th><th>Ask</th></tr></thead>
        <tbody>
          {QUOTES.map(([name, up, bid, bidUp, ask, askUp]) => (
            <QuoteRow key={name}>
              <SymbolCell><TrendArrow up={up} />{name}</SymbolCell>
              <Quote $up={bidUp}>{bid}</Quote>
              <Quote $up={askUp}>{ask}</Quote>
            </QuoteRow>
          ))}
          <AddRow>
            <SymbolCell>
              <svg width="8" height="8" viewBox="0 0 8 8" aria-hidden="true"><path d="M4 0v8M0 4h8" stroke="#3fae28" strokeWidth="1.800" /></svg>
              добавить...
            </SymbolCell>
            <td colSpan={2}>8 / 70</td>
          </AddRow>
        </tbody>
      </Quotes>
    </PanelBody>
    <LeadTabs>
      <Tab $on>Символы</Tab><Tab>Детали</Tab><Tab $last>Торговля</Tab>
    </LeadTabs>
  </Panel>
);

const BRANCH: [string, React.ReactNode, boolean][] = [
  ["Трендовые", <FIcon />, true],
  ["Осцилляторы", <FIcon />, true],
  ["Объемы", <FIcon />, true],
  ["Билла Вильямса", <FIcon />, true],
  ["Examples", <FIcon own />, true],
  ["Trend Levels", <FIcon own />, false],
  ["еще...", <MarketIcon />, false],
];

const Navigator = () => (
  <Panel $grow>
    <PanelHead>
      <PanelTitle>Навигатор</PanelTitle>
      <CloseButton aria-label="Закрыть"><Close /></CloseButton>
    </PanelHead>
    <PanelBody $grow>
      <Tree>
        <TreeItem><WindowsIcon /><TreeLabel>Alpari MT5</TreeLabel></TreeItem>
        <TreeItem><Guide box="+" /><UsersIcon /><TreeLabel>Счета</TreeLabel></TreeItem>
        <TreeItem><Guide box="-" /><FIcon /><TreeLabel>Индикаторы</TreeLabel></TreeItem>
        {BRANCH.map(([name, icon, box], i) => (
          <TreeItem key={name}>
            <Guide stub={false} />
            <Guide box={box ? "+" : undefined} down={i < BRANCH.length - 1} />
            {icon}
            <TreeLabel>{name}</TreeLabel>
          </TreeItem>
        ))}
        <TreeItem><Guide box="+" /><ExpertIcon /><TreeLabel>Советники</TreeLabel></TreeItem>
        <TreeItem><Guide box="+" down={false} /><ScriptIcon /><TreeLabel>Скрипты</TreeLabel></TreeItem>
      </Tree>
    </PanelBody>
    <LeadTabs><Tab $on>Общие</Tab><Tab>Избранное</Tab></LeadTabs>
  </Panel>
);

const TOOL_TABS = ["Торговля", "Активы", "История", "Новости", "Почта", "Календарь", "Компания", "Маркет", "Алерты", "Сигналы", "Библиотека", "Эксперты", "Журнал"];
const BADGES: Record<string, string> = { Новости: "99", Почта: "7" };

export default function App() {
  return (
    <Window>
      <GlobalStyle />
      <TitleBar>
        <AppIcon />
        <Title>50199197 - Alpari-MT5-Demo: Демо-счет - Hedge - [EURUSD,H1]</Title>
        <CaptionButton aria-label="Свернуть"><Icon w={11}><path d="M0 6.500h10" stroke="#000" /></Icon></CaptionButton>
        <CaptionButton aria-label="Восстановить"><Icon w={11}><path d="M.5 2.500h7v7h-7zM2.500 2.500v-2h7v7h-2" stroke="#000" /></Icon></CaptionButton>
        <CaptionButton aria-label="Закрыть"><Close s={11} w={1.1} /></CaptionButton>
      </TitleBar>
      <MenuBar>
        <WindowsIcon />
        <MenuItems>
          {["Файл", "Вид", "Вставка", "Графики", "Сервис", "Окно", "Справка"].map((m) => <MenuItem key={m}>{m}</MenuItem>)}
        </MenuItems>
        <ChildButton aria-label="Свернуть окно"><Icon w={8}><path d="M1 6.500h6" stroke="#6b7a88" strokeWidth="2" /></Icon></ChildButton>
        <ChildButton aria-label="Восстановить окно"><Icon w={8}><path d="M.5 3.500h5v4h-5zM2.500 3V.8h5V5H6" stroke="#6b7a88" strokeWidth="1.300" /></Icon></ChildButton>
        <ChildButton aria-label="Закрыть окно"><Close s={7} c="#5b6670" w={2} /></ChildButton>
      </MenuBar>
      <Toolbar>
        <Grip />
        <ToolButton $wide aria-label="Новый график"><ChartsIcon /><DropIcon /></ToolButton>
        <ToolButton aria-label="Символы"><BookIcon /></ToolButton>
        <ToolButton aria-label="Окна"><TerminalIcon /></ToolButton>
        <ToolButton $on aria-label="Свечи"><CandlesIcon /></ToolButton>
        <ToolButton aria-label="Линия"><LineIcon /></ToolButton>
        <ToolButton aria-label="Приблизить"><ZoomIcon plus /></ToolButton>
        <ToolButton aria-label="Отдалить"><ZoomIcon /></ToolButton>
        <ToolButton aria-label="Плитка"><TileIcon /></ToolButton>
        <ToolSeparator $gap={3} />
        <ToolButton aria-label="Автопрокрутка"><AutoScrollIcon /></ToolButton>
        <ToolButton $on aria-label="Сдвиг"><ShiftIcon /></ToolButton>
        <ToolSeparator />
        <Grip />
        <ToolButton aria-label="Перекрестие"><CrossIcon /></ToolButton>
        <ToolButton aria-label="Вертикальная линия"><VLineIcon /></ToolButton>
        <ToolButton aria-label="Горизонтальная линия"><HLineIcon /></ToolButton>
        <ToolButton aria-label="Трендовая линия"><TrendIcon /></ToolButton>
        <ToolButton aria-label="Текст"><TextIcon /></ToolButton>
        <ToolButton aria-label="Фигуры"><ShapesIcon /></ToolButton>
        <ArrowButton aria-label="Еще"><DropIcon /></ArrowButton>
        <ToolSeparator />
        <Grip />
        {["M1", "M5", "M15", "M30", "H1", "H4", "D1", "W1", "MN"].map((t) => <ToolButton key={t} $on={t === "H1"}>{t}</ToolButton>)}
        <ToolSeparator />
        <SideTools>
          <ToolButton aria-label="Поиск"><SearchIcon /></ToolButton>
          <ToolButton aria-label="Чат"><ChatIcon /></ToolButton>
        </SideTools>
      </Toolbar>

      <Workspace>
        <Dock>
          <MarketWatch />
          <Navigator />
        </Dock>
        <ChartPane>
          <Chart />
          <ChartTabs $h={25}>
            <Tab>EURUSD,H1</Tab><Tab>GBPUSD,H1</Tab><Tab>USDCHF,H1</Tab><Tab $last>USDJPY,H1</Tab><Tab $on>EURUSD,H1</Tab>
            <Spacer />
            <ArrowButton $wide aria-label="Назад"><Icon w={4} h={7}><path d="M4 0v7L0 3.500z" fill="#8a8a8a" /></Icon></ArrowButton>
            <ArrowButton $wide aria-label="Вперед"><Icon w={4} h={7}><path d="M0 0v7l4-3.500z" fill="#8a8a8a" /></Icon></ArrowButton>
          </ChartTabs>
        </ChartPane>
      </Workspace>

      <Toolbox>
        <ToolboxSide>
          <CloseButton aria-label="Закрыть"><Close s={6} /></CloseButton>
          <SideTitle>Инструменты</SideTitle>
        </ToolboxSide>
        <ToolboxMain>
          <MailArea>
            <MailClip>
              <Mail>
                <colgroup><col /><col width="376" /><col width="416" /><col width="151" /></colgroup>
                <thead><tr><th>Тема</th><th>От</th><th>Кому</th><th>Время</th></tr></thead>
                <tbody>
                  {MAILS.map(([subject, date]) => (
                    <tr key={subject}>
                      <td><MailIcon />{subject}</td><td>Trading Platform</td><td /><td>{date}</td>
                    </tr>
                  ))}
                </tbody>
              </Mail>
            </MailClip>
            <ScrollBar>
              <Icon w={9} h={6}><path d="m.5 5.500 4-4 4 4" stroke="#555" strokeWidth="1.600" /></Icon>
              <Thumb />
              <Icon w={9} h={6}><path d="m.5.5 4 4 4-4" stroke="#555" strokeWidth="1.600" /></Icon>
            </ScrollBar>
          </MailArea>
          <LeadTabs $h={26}>
            {TOOL_TABS.map((t) => (
              <Tab key={t} $on={t === "Почта"} $last={t === "Новости"}>
                {t}{BADGES[t] && <Badge>{BADGES[t]}</Badge>}
              </Tab>
            ))}
            <Tester>Тестер стратегий</Tester>
          </LeadTabs>
        </ToolboxMain>
      </Toolbox>

      <StatusBar>
        <Hint>Для вызова справки нажмите F1</Hint>
        <Cell $w={165}>1. Основные пары</Cell>
        <Cell $w={128} $large>2018.02.28 11:00</Cell>
        <Cell $w={91}>O: 1.22105</Cell>
        <Cell $w={91}>H: 1.22230</Cell>
        <Cell $w={87}>L: 1.21985</Cell>
        <Cell $w={89}>C: 1.22201</Cell>
        <Cell $w={85} />
        <Cell $w={146} $large>
          <Icon w={16}>
            <path d="M2 1h8l3 2v12H5l-3-2z" fill="#4ab0ea" stroke="#1f7cba" />
            <path d="M5 3v12M7 5h4M7 7h4" stroke="#d6f0fd" />
            <circle cx="12" cy="12" r="3.500" fill="#5cb531" stroke="#2d7b16" />
            <path d="M12 10v4M10.500 12.500 12 14l1.500-1.500" stroke="#fff" />
          </Icon>
          908 / 4 Kb
        </Cell>
      </StatusBar>

      <Taskbar>
        <TaskButton aria-label="Пуск"><Icon w={16}><path d="m0 2 7-1v6.500H0zM8 1l8-1v7.500H8zM0 8.500h7V15l-7-1zM8 8.500h8V16l-8-1z" fill="#fff" /></Icon></TaskButton>
        <TaskButton aria-label="Поиск"><Icon w={16}><circle cx="10" cy="6" r="5" stroke="#fff" strokeWidth="1.400" /><path d="m6.500 9.500-6 6" stroke="#fff" strokeWidth="1.500" /></Icon></TaskButton>
        <TaskButton aria-label="Представление задач"><Icon w={20} h={16}><path d="M4.500 1.500h11v13h-11zM2.500 3.500h-2v9h2M17.500 3.500h2v9h-2" stroke="#fff" /></Icon></TaskButton>
        <OpenApps>
          <TaskButton $open aria-label="Проводник">
            <Icon w={22} h={24}><path d="M3 3h9l2 2v17H3z" fill="#f3d77a" /><path d="M3 3h4v21l-4-3z" fill="#fbeeb5" /><path d="M15 14V8h-3l5-7 5 6h-3q1 5-4 7z" fill="#3fc33c" /><path d="M12 12h7v9l-7 2z" fill="#e7c35a" /></Icon>
          </TaskButton>
          <TaskButton $open $on aria-label="Alpari">
            <svg width="26" height="28" viewBox="0 0 26 28" fill="none" aria-hidden="true">
              <path d="M2 15C4-1 22-1 24 15" stroke="#b5342a" strokeWidth="1.300" strokeDasharray="2 1" />
              <path d="M4 15c3-13 15-13 18 0" stroke="#c87b2a" strokeWidth="1.300" strokeDasharray="2 1" />
              <path d="M6 15c3-10 11-10 14 0" stroke="#a9a02c" strokeWidth="1.300" strokeDasharray="2 1" />
              <path d="M9 15c2-7 6-7 8 0" stroke="#4f9a35" strokeWidth="1.300" strokeDasharray="2 1" />
              <text x="13" y="25" textAnchor="middle" fontSize="10" fontFamily="Lato, sans-serif" fill="#0c0c0c">alpari</text>
            </svg>
          </TaskButton>
          <TaskButton $open aria-label="Chrome">
            <Icon w={22}>
              <circle cx="11" cy="11" r="11" fill="#fbc116" />
              <path d="M11 11 1.500 5.500A11 11 0 0 1 20.500 5.500H11z" fill="#e33b2e" />
              <path d="M1.500 5.500A11 11 0 0 0 10.500 22l5-8.500L11 11z" fill="#2ca14b" />
              <circle cx="11" cy="11" r="5" fill="#fff" /><circle cx="11" cy="11" r="4" fill="#4285f4" />
            </Icon>
          </TaskButton>
          <TaskButton $open aria-label="Excel">
            <Icon w={22}>
              <path d="M11 3h10v16H11z" fill="#fff" stroke="#1f7244" /><path d="M14 6h6M14 9h6M14 12h6M14 15h6M16.500 4v14" stroke="#1f7244" />
              <path d="m0 2 13-2v22L0 20z" fill="#1f7244" /><path d="m3.500 7 6 8M9.500 7l-6 8" stroke="#fff" strokeWidth="1.800" />
            </Icon>
          </TaskButton>
          <TaskButton $open aria-label="Muse">
            <svg width="22" height="22" viewBox="0 0 22 22" aria-hidden="true">
              <rect x="1" y="1" width="20" height="20" fill="#2a3200" stroke="#c6dc00" strokeWidth="1.500" />
              <text x="11" y="16" textAnchor="middle" fontSize="12" fontFamily="Lato, sans-serif" fill="#c6dc00">Mu</text>
            </svg>
          </TaskButton>
        </OpenApps>
        <Tray>
          <Icon w={12} h={8}><path d="m1 7 5-5 5 5" stroke="#fff" strokeWidth="1.200" /></Icon>
          <Icon w={16}><path d="M4.500 2.500h11v8h-11zM7 14.500h6M10 11v3M.5.5h4v4h-4zM2.500 5v9" stroke="#fff" /></Icon>
          <Icon w={17} h={16}><path d="M1 6h2l4-4v12l-4-4H1zM9 5q2 3 0 6M11.500 3q3.500 5 0 10M14 1.500q4.500 6.500 0 13" stroke="#fff" /></Icon>
          <span>РУС</span>
          <Clock>{"13:48\n28.02.2018"}</Clock>
          <Icon w={17} h={18}><path d="M.5 1.500h16v12h-5L8 17v-3.500H.5z" stroke="#fff" /></Icon>
          <DesktopEdge />
        </Tray>
      </Taskbar>
    </Window>
  );
}
